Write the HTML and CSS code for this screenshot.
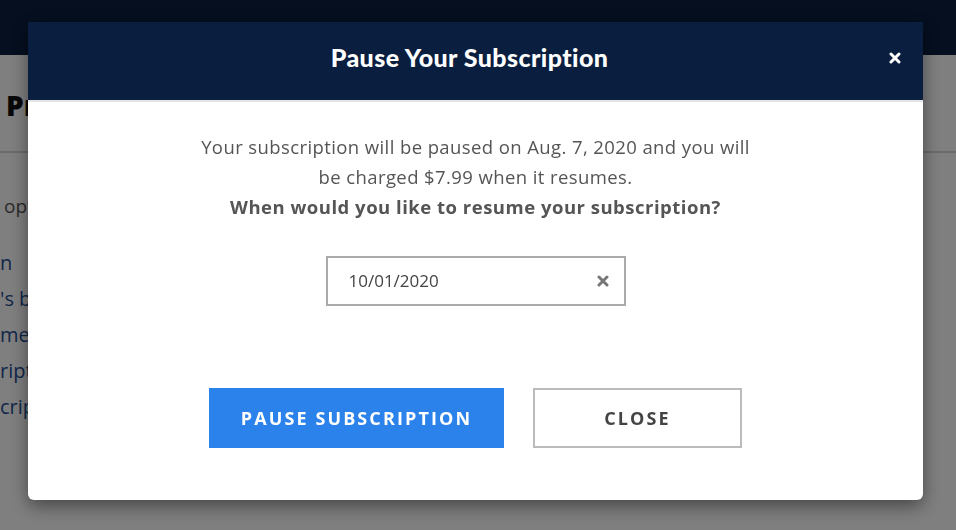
FILE: index.html
```html
<!DOCTYPE html>
<html lang="en">
<head>
  <meta charset="UTF-8" />
  <title>Pause Your Subscription</title>
  <meta name="viewport" content="width=device-width, initial-scale=1.0" />
  <link rel="stylesheet" href="styles.css">
</head>
<body>
  <header class="topbar"></header>

  <main class="account">
    <h1 class="account-title">Profile</h1>
    <p class="account-intro">options for your account</p>
    <ul class="account-links">
      <li><a href="#">n</a></li>
      <li><a href="#">'s box</a></li>
      <li><a href="#">mer settings</a></li>
      <li><a href="#">ription</a></li>
      <li><a href="#">cription</a></li>
    </ul>
  </main>

  <div class="overlay">
    <div class="modal">
      <div class="modal-header">
        <h2>Pause Your Subscription</h2>
        <button class="modal-close" title="Close">
          <svg width="12" height="12" viewBox="0 0 12 12"><path d="M2 2 L10 10 M10 2 L2 10" stroke="#fff" stroke-width="3" stroke-linecap="round"/></svg>
        </button>
      </div>

      <div class="modal-body">
        <p class="modal-text">Your subscription will be paused on Aug. 7, 2020 and you will be charged $7.99 when it resumes.</p>
        <p class="modal-question">When would you like to resume your subscription?</p>

        <div class="date-field">
          <span class="date-value">10/01/2020</span>
          <svg width="12" height="12" viewBox="0 0 12 12"><path d="M2 2 L10 10 M10 2 L2 10" stroke="#777" stroke-width="3" stroke-linecap="round"/></svg>
        </div>

        <div class="modal-actions">
          <button class="btn btn-primary">PAUSE SUBSCRIPTION</button>
          <button class="btn btn-outline">CLOSE</button>
        </div>
      </div>
    </div>
  </div>
</body>
</html>
```

FILE: styles.css
```css
:root {
  --navy: #0a1e3f;
  --text: #555;
  --blue: #2a82ea;
}

* {
  box-sizing: border-box;
}

body {
  margin: 0;
  font-family: 'Open Sans', sans-serif;
  background: #fff;
  color: #333;
  overflow: hidden;
}

.topbar {
  height: 55px;
  background: var(--navy);
}

.account-title {
  margin: 0;
  padding: 31px 6px 27px;
  font-size: 28px;
  font-weight: 800;
  color: #111;
  border-bottom: 2px solid #d6d6d6;
}

.account-intro {
  margin: 40px 0 0 4px;
  font-size: 19px;
  color: #555;
}

.account-links {
  list-style: none;
  margin: 26px 0 0;
  padding: 0;
}

.account-links li {
  height: 36px;
  font-size: 20px;
  line-height: 36px;
}

.account-links a {
  color: #1f4f93;
  text-decoration: none;
}

.overlay {
  position: fixed;
  inset: 0;
  background: rgba(0, 0, 0, 0.5);
  padding: 22px 0 0 28px;
}

.modal {
  width: 895px;
  background: #fff;
  border-radius: 0 0 6px 6px;
  box-shadow: 0 6px 18px rgba(0, 0, 0, 0.45);
}

.modal-header {
  height: 80px;
  background: var(--navy);
  border-bottom: 2px solid #e4e4e4;
  display: flex;
  align-items: center;
  justify-content: center;
  position: relative;
}

.modal-header h2 {
  margin: 0 12px 8px 0;
  font-family: 'Lato', sans-serif;
  font-weight: 900;
  font-size: 25px;
  letter-spacing: 0.4px;
  color: #fff;
}

.modal-close {
  position: absolute;
  right: 22px;
  top: 30px;
  background: none;
  border: none;
  padding: 0;
  cursor: pointer;
}

.modal-body {
  padding: 30px 0 52px;
  display: flex;
  flex-direction: column;
  align-items: center;
  color: var(--text);
  font-size: 18.5px;
  line-height: 30px;
}

.modal-text {
  margin: 0;
  max-width: 560px;
  letter-spacing: 0.4px;
  text-align: center;
}

.modal-question {
  margin: 0;
  font-weight: 700;
  letter-spacing: 0.5px;
  text-align: center;
}

.date-field {
  margin-top: 34px;
  width: 300px;
  height: 50px;
  border: 2px solid #aaa;
  display: flex;
  align-items: center;
  justify-content: space-between;
  padding: 0 15px 0 21px;
  font-size: 17px;
  color: #444;
}

.modal-actions {
  margin-top: 82px;
  display: flex;
  gap: 29px;
}

.btn {
  height: 60px;
  font-family: 'Open Sans', sans-serif;
  font-size: 18px;
  font-weight: 700;
  letter-spacing: 2.1px;
  padding: 0 30px;
  border: none;
  cursor: pointer;
}

.btn-primary {
  background: var(--blue);
  color: #fff;
  width: 295px;
}

.btn-outline {
  background: #fff;
  color: #444;
  border: 2px solid #bbb;
  width: 209px;
}
```
